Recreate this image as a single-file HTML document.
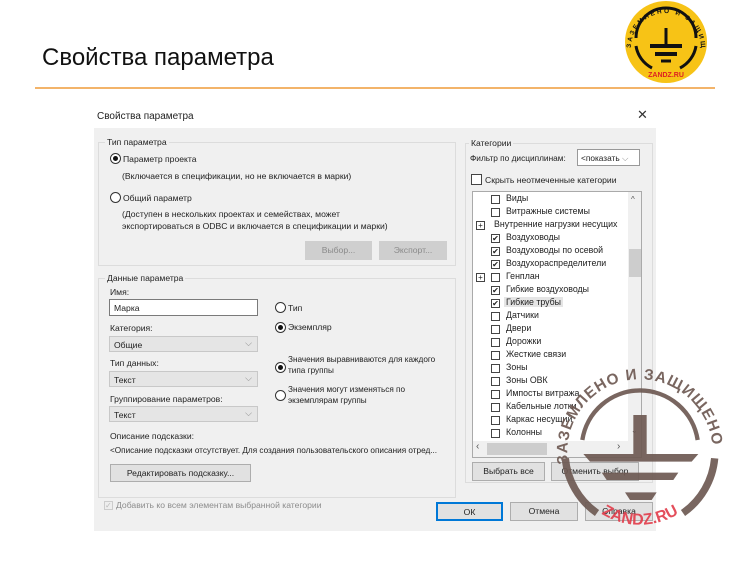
<!DOCTYPE html>
<html><head><meta charset="utf-8">
<style>
*{margin:0;padding:0;box-sizing:border-box}
body{width:750px;height:563px;background:#fff;position:relative;overflow:hidden;font-family:"Liberation Sans",sans-serif;color:#222}
.a{position:absolute;white-space:nowrap}
.s{font-size:8.6px}
.grp{position:absolute;border:1px solid #dcdcdc}
.lg{position:absolute;background:#f0f0f0;padding:0 2px;font-size:8.6px;top:-6px;left:6px}
.rad{position:absolute;width:11px;height:11px;border:1px solid #333;border-radius:50%;background:#fff}
.rad.on::after{content:"";position:absolute;left:2px;top:2px;width:5px;height:5px;border-radius:50%;background:#111}
.btn{position:absolute;border:1px solid #adadad;background:#e1e1e1;font-size:8.6px;text-align:center}
.btn.dis{background:#cfcfcf;border-color:#cfcfcf;color:#8a8a8a}
.sel{position:absolute;background:#e5e5e5;border:1px solid #c8c8c8;font-size:8.6px;padding:3px 4px}
.sel::after{content:"⌵";position:absolute;right:5px;top:1px;color:#888;font-size:9px}
.cb{position:absolute;width:9px;height:9px;border:1px solid #444;background:#fff;font-size:8px;line-height:8px;text-align:center}
.li{position:absolute;left:0;font-size:8.8px;height:13px}
</style></head><body>
<div class="a" style="left:42px;top:44px;font-size:24px;color:#111">Свойства параметра</div>
<div class="a" style="left:35px;top:87px;width:680px;height:2px;background:#f3b46a"></div>

<svg class="a" style="left:622px;top:0" width="88" height="86" viewBox="0 0 88 86">
<circle cx="44" cy="42" r="41" fill="#f7c316"/>
<path d="M14 38 A30 30 0 0 1 74 38" fill="none" stroke="#111" stroke-width="3"/>
<path d="M14 46 A30 30 0 0 0 30 68" fill="none" stroke="#111" stroke-width="3"/>
<path d="M74 46 A30 30 0 0 1 58 68" fill="none" stroke="#111" stroke-width="3"/>
<line x1="44" y1="28" x2="44" y2="45" stroke="#111" stroke-width="3"/>
<line x1="28" y1="46" x2="60" y2="46" stroke="#111" stroke-width="4"/>
<line x1="33" y1="54" x2="55" y2="54" stroke="#111" stroke-width="4"/>
<line x1="39" y1="61" x2="49" y2="61" stroke="#111" stroke-width="3"/>
<defs><path id="lt" d="M9 48 A35 35 0 1 1 79 48"/></defs>
<text font-size="6.5" font-weight="bold" fill="#111" font-family="Liberation Sans"><textPath href="#lt" textLength="130">ЗАЗЕМЛЕНО И ЗАЩИЩЕНО</textPath></text>
<text x="44" y="77" font-size="7" font-weight="bold" fill="#d22" text-anchor="middle" font-family="Liberation Sans">ZANDZ.RU</text>
</svg>

<!-- dialog -->
<div class="a" style="left:94px;top:104px;width:562px;height:427px;background:#fff"></div>
<div class="a" style="left:97px;top:111px;font-size:10px">Свойства параметра</div>
<div class="a" style="left:637px;top:107px;font-size:13px;color:#333">✕</div>
<div class="a" style="left:94px;top:128px;width:562px;height:403px;background:#f0f0f0"></div>

<div class="grp" style="left:98px;top:142px;width:358px;height:124px"><span class="lg">Тип параметра</span></div>
<div class="rad on" style="left:110px;top:153px"></div><div class="a s" style="left:123px;top:154px">Параметр проекта</div>
<div class="a s" style="left:122px;top:171px">(Включается в спецификации, но не включается в марки)</div>
<div class="rad" style="left:110px;top:192px"></div><div class="a s" style="left:123px;top:193px">Общий параметр</div>
<div class="a s" style="left:122px;top:208px;line-height:12px">(Доступен в нескольких проектах и семействах, может<br>экспортироваться в ODBC и включается в спецификации и марки)</div>
<div class="btn dis" style="left:305px;top:241px;width:67px;height:19px;line-height:17px">Выбор...</div>
<div class="btn dis" style="left:379px;top:241px;width:68px;height:19px;line-height:17px">Экспорт...</div>

<div class="grp" style="left:98px;top:278px;width:358px;height:220px"><span class="lg">Данные параметра</span></div>
<div class="a s" style="left:110px;top:287px">Имя:</div>
<div class="a s" style="left:109px;top:299px;width:149px;height:17px;background:#fff;border:1px solid #7a7a7a;padding:3px 4px">Марка</div>
<div class="a s" style="left:110px;top:323px">Категория:</div>
<div class="sel" style="left:109px;top:336px;width:149px;height:16px">Общие</div>
<div class="a s" style="left:110px;top:358px">Тип данных:</div>
<div class="sel" style="left:109px;top:371px;width:149px;height:16px">Текст</div>
<div class="a s" style="left:110px;top:394px">Группирование параметров:</div>
<div class="sel" style="left:109px;top:406px;width:149px;height:16px">Текст</div>
<div class="a s" style="left:110px;top:431px">Описание подсказки:</div>
<div class="a s" style="left:110px;top:446px;font-size:8.2px">&lt;Описание подсказки отсутствует. Для создания пользовательского описания отред...</div>
<div class="btn" style="left:110px;top:464px;width:141px;height:18px;line-height:16px">Редактировать подсказку...</div>
<div class="rad" style="left:275px;top:302px"></div><div class="a s" style="left:288px;top:303px">Тип</div>
<div class="rad on" style="left:275px;top:322px"></div><div class="a s" style="left:288px;top:322px">Экземпляр</div>
<div class="rad on" style="left:275px;top:362px"></div><div class="a s" style="left:288px;top:354px;line-height:11px;font-size:8.2px">Значения выравниваются для каждого<br>типа группы</div>
<div class="rad" style="left:275px;top:390px"></div><div class="a s" style="left:288px;top:384px;line-height:11px;font-size:8.2px">Значения могут изменяться по<br>экземплярам группы</div>
<div class="a" style="left:104px;top:501px;width:9px;height:9px;border:1px solid #ccc;background:#eee;font-size:8px;color:#bbb;line-height:8px">✓</div>
<div class="a s" style="left:116px;top:500px;color:#8c8c8c">Добавить ко всем элементам выбранной категории</div>

<div class="grp" style="left:465px;top:143px;width:188px;height:340px"><span class="lg" style="left:3px">Категории</span></div>
<div class="a s" style="left:470px;top:153px;font-size:8.3px">Фильтр по дисциплинам:</div>
<div class="a s" style="left:577px;top:149px;width:63px;height:17px;background:#fff;border:1px solid #999;padding:3px 3px;overflow:hidden;font-size:8.3px">&lt;показать <span style="color:#888">⌵</span></div>
<div class="cb" style="left:471px;top:174px;width:11px;height:11px"></div><div class="a s" style="left:485px;top:175px">Скрыть неотмеченные категории</div>
<div class="a" style="left:472px;top:191px;width:170px;height:267px;background:#fff;border:1px solid #aaa;overflow:hidden">
 <div class="a" style="left:155px;top:0;width:14px;height:265px;background:#f0f0f0"></div>
 <div class="a" style="left:156px;top:57px;width:12px;height:28px;background:#cdcdcd"></div>
 <div class="a" style="left:158px;top:3px;font-size:8px;color:#555">^</div>
 <div class="a" style="left:158px;top:234px;font-size:8px;color:#555">⌄</div>
 <div class="a" style="left:0;top:249px;width:155px;height:16px;background:#f0f0f0"></div>
 <div class="a" style="left:14px;top:251px;width:60px;height:12px;background:#cdcdcd"></div>
 <div class="a" style="left:3px;top:249px;font-size:10px;color:#555">‹</div>
 <div class="a" style="left:144px;top:249px;font-size:10px;color:#555">›</div>
</div>
<div class="a" style="left:472px;top:193px;width:155px;height:247px;overflow:hidden">
<div class="li" style="top:0"><div class="cb" style="left:19px;top:2px"></div><span class="a" style="left:34px;top:0">Виды</span></div>
<div class="li" style="top:13px"><div class="cb" style="left:19px;top:2px"></div><span class="a" style="left:34px;top:0">Витражные системы</span></div>
<div class="li" style="top:26px"><div class="cb" style="left:4px;top:2px;font-size:8px">+</div><span class="a" style="left:22px;top:0">Внутренние нагрузки несущих</span></div>
<div class="li" style="top:39px"><div class="cb" style="left:19px;top:2px">✔</div><span class="a" style="left:34px;top:0">Воздуховоды</span></div>
<div class="li" style="top:52px"><div class="cb" style="left:19px;top:2px">✔</div><span class="a" style="left:34px;top:0">Воздуховоды по осевой</span></div>
<div class="li" style="top:65px"><div class="cb" style="left:19px;top:2px">✔</div><span class="a" style="left:34px;top:0">Воздухораспределители</span></div>
<div class="li" style="top:78px"><div class="cb" style="left:4px;top:2px;font-size:8px">+</div><div class="cb" style="left:19px;top:2px"></div><span class="a" style="left:34px;top:0">Генплан</span></div>
<div class="li" style="top:91px"><div class="cb" style="left:19px;top:2px">✔</div><span class="a" style="left:34px;top:0">Гибкие воздуховоды</span></div>
<div class="li" style="top:104px"><div class="cb" style="left:19px;top:2px">✔</div><span class="a" style="left:32px;top:0;background:#e5e5e5;padding:0 2px">Гибкие трубы</span></div>
<div class="li" style="top:117px"><div class="cb" style="left:19px;top:2px"></div><span class="a" style="left:34px;top:0">Датчики</span></div>
<div class="li" style="top:130px"><div class="cb" style="left:19px;top:2px"></div><span class="a" style="left:34px;top:0">Двери</span></div>
<div class="li" style="top:143px"><div class="cb" style="left:19px;top:2px"></div><span class="a" style="left:34px;top:0">Дорожки</span></div>
<div class="li" style="top:156px"><div class="cb" style="left:19px;top:2px"></div><span class="a" style="left:34px;top:0">Жесткие связи</span></div>
<div class="li" style="top:169px"><div class="cb" style="left:19px;top:2px"></div><span class="a" style="left:34px;top:0">Зоны</span></div>
<div class="li" style="top:182px"><div class="cb" style="left:19px;top:2px"></div><span class="a" style="left:34px;top:0">Зоны ОВК</span></div>
<div class="li" style="top:195px"><div class="cb" style="left:19px;top:2px"></div><span class="a" style="left:34px;top:0">Импосты витража</span></div>
<div class="li" style="top:208px"><div class="cb" style="left:19px;top:2px"></div><span class="a" style="left:34px;top:0">Кабельные лотки</span></div>
<div class="li" style="top:221px"><div class="cb" style="left:19px;top:2px"></div><span class="a" style="left:34px;top:0">Каркас несущий</span></div>
<div class="li" style="top:234px"><div class="cb" style="left:19px;top:2px"></div><span class="a" style="left:34px;top:0">Колонны</span></div>
</div>
<div class="btn" style="left:472px;top:462px;width:73px;height:19px;line-height:17px">Выбрать все</div>
<div class="btn" style="left:551px;top:462px;width:88px;height:19px;line-height:17px">Отменить выбор</div>

<div class="btn" style="left:436px;top:502px;width:67px;height:19px;line-height:16px;border:2px solid #0078d7">ОК</div>
<div class="btn" style="left:510px;top:502px;width:68px;height:19px;line-height:17px">Отмена</div>
<div class="btn" style="left:585px;top:502px;width:68px;height:19px;line-height:17px">Справка</div>

<!-- watermark -->
<svg class="a" style="left:540px;top:340px" width="210" height="223" viewBox="0 0 630 669">
<defs>
<path id="wt" d="M85 372 A218 218 0 1 1 515 372"/>
<path id="wb" d="M159 503 A220 220 0 0 0 441 503"/>
</defs>
<g fill="#6e5a53" opacity="0.92">
<text font-size="46" font-weight="bold" font-family="Liberation Sans"><textPath href="#wt" textLength="700" lengthAdjust="spacing">ЗАЗЕМЛЕНО И ЗАЩИЩЕНО</textPath></text>
<path d="M127 300 A175 175 0 0 1 473 300" fill="none" stroke="#6e5a53" stroke-width="13"/>
<path d="M76 355 A225 225 0 0 0 171 519" fill="none" stroke="#6e5a53" stroke-width="22"/>
<path d="M524 355 A225 225 0 0 1 429 519" fill="none" stroke="#6e5a53" stroke-width="22"/>
<rect x="280" y="225" width="40" height="120"/>
<polygon points="130,342 475,342 455,365 150,365"/>
<polygon points="185,398 415,398 400,420 200,420"/>
<polygon points="255,457 350,457 335,480 270,480"/>
</g>
<text font-size="48" font-weight="bold" fill="#e2404e" font-family="Liberation Sans" opacity="0.92"><textPath href="#wb" startOffset="50%" text-anchor="middle">ZANDZ.RU</textPath></text>
</svg>
</body></html>
